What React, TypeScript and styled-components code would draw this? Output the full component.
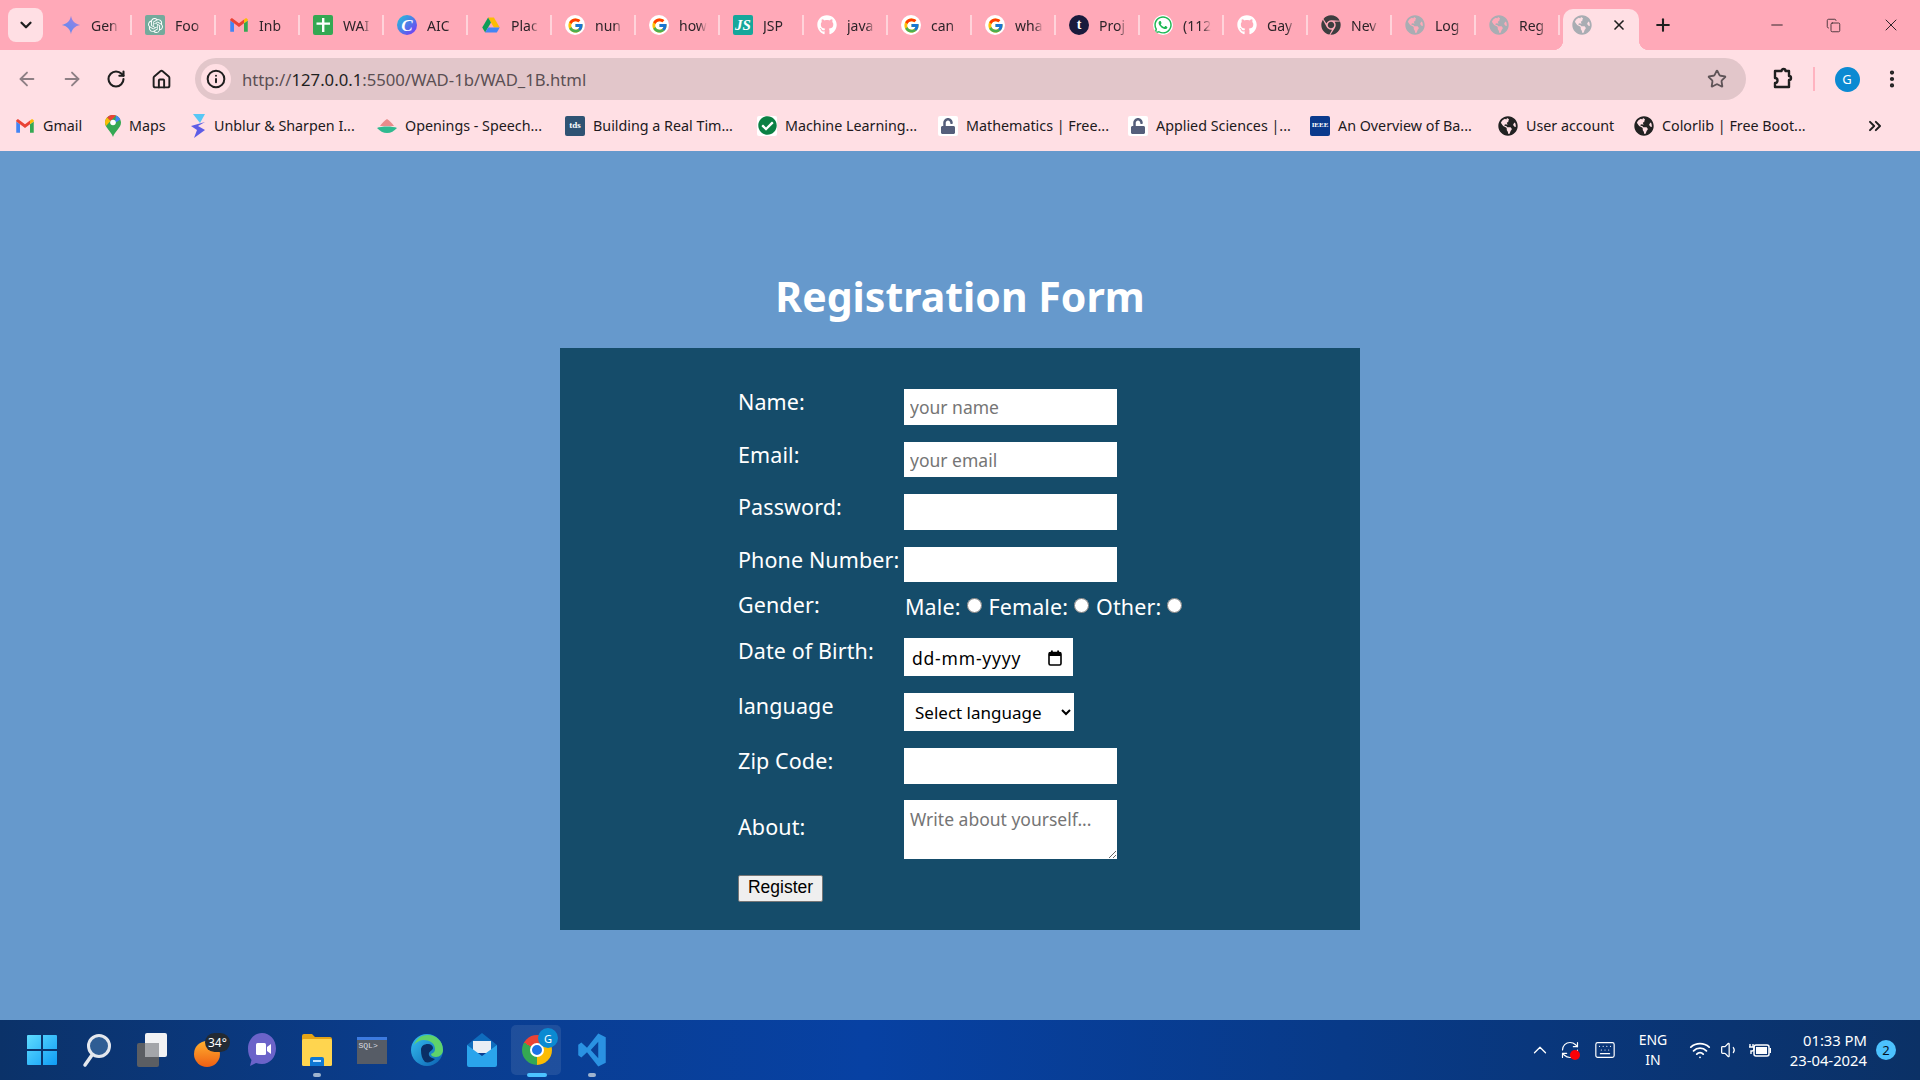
import type { ReactNode } from 'react'
import styled, { createGlobalStyle } from 'styled-components'
import {
  ArrowLeft, ArrowRight, ChevronDown, ChevronUp, ChevronsRight, Copy, Home, Info,
  Keyboard, Minus, MoreVertical, Plus, RefreshCw, RotateCw, Star, Volume1, Wifi, X,
} from 'lucide-react'
import { FcGoogle } from 'react-icons/fc'
import { FaChrome, FaCheckCircle, FaGithub, FaGlobeAmericas, FaUnlock, FaWhatsapp } from 'react-icons/fa'
import { SiOpenai } from 'react-icons/si'

const UI_FONT = `"Noto Sans", "Open Sans", sans-serif`

const GlobalStyle = createGlobalStyle`
  html, body { margin: 0; padding: 0; height: 100%; overflow: hidden; }
  body { font-family: ${UI_FONT}; }
`

const Screen = styled.div`
  width: 1920px;
  height: 1080px;
  display: flex;
  flex-direction: column;
  background: #6699cc;
`

/* tab strip */

const TabStrip = styled.div`
  height: 50px;
  flex: none;
  display: flex;
  align-items: flex-start;
  background: #ffa9b8;
  position: relative;
`

const TabSearch = styled.div`
  width: 35px;
  height: 34px;
  margin: 8px 5px 0 8px;
  border-radius: 8px;
  background: #ffdfe4;
  display: flex;
  align-items: center;
  justify-content: center;
  color: #1f1f1f;
`

const Tab = styled.div<{ $active?: boolean }>`
  width: 84px;
  height: 50px;
  flex: none;
  box-sizing: border-box;
  padding-left: 13px;
  display: flex;
  align-items: center;
  gap: 10px;
  position: relative;
  font-size: 14px;
  color: #2d2429;

  ${p => !p.$active && `
    &:not(:nth-last-of-type(2))::after {
      content: '';
      position: absolute;
      right: 0;
      top: 15px;
      width: 2px;
      height: 20px;
      background: #ffd3da;
    }
  `}

  ${p => p.$active && `
    margin-left: -1px;

    &::before {
      content: '';
      position: absolute;
      z-index: 0;
      left: 4px;
      right: 4px;
      top: 9px;
      bottom: 0;
      background: #ffdfe4;
      border-radius: 10px 10px 0 0;
    }
  `}
`

const TabCorner = styled.span<{ $side: 'left' | 'right' }>`
  position: absolute;
  bottom: 0;
  width: 10px;
  height: 10px;
  ${p => (p.$side === 'left' ? 'left: -6px;' : 'right: -6px;')}
  background: radial-gradient(circle at ${p => (p.$side === 'left' ? '0 0' : '100% 0')}, transparent 10px, #ffdfe4 10.5px);
`

const FavSlot = styled.span<{ $round?: boolean; $bg?: string; $color?: string }>`
  width: 20px;
  height: 20px;
  flex: none;
  display: flex;
  align-items: center;
  justify-content: center;
  position: relative;
  z-index: 1;
  border-radius: ${p => (p.$round ? '50%' : '2px')};
  background: ${p => p.$bg ?? 'transparent'};
  color: ${p => p.$color ?? 'inherit'};
  overflow: hidden;
`

const LetterMark = styled.span<{ $size: number; $italic?: boolean }>`
  font-family: "Liberation Serif", serif;
  font-size: ${p => p.$size}px;
  font-weight: 700;
  font-style: ${p => (p.$italic ? 'italic' : 'normal')};
  color: #fff;
  line-height: 1;
`

const TabTitle = styled.span`
  width: 28px;
  overflow: hidden;
  white-space: nowrap;
  mask-image: linear-gradient(to right, #000 70%, transparent);
`

const TabClose = styled.span`
  position: absolute;
  left: 52px;
  top: 17px;
  display: flex;
  color: #1f1f1f;
`

const NewTab = styled.span`
  margin: 15px 0 0 10px;
  display: flex;
  color: #1f1f1f;
`

const WindowControls = styled.div`
  margin-left: auto;
  height: 50px;
  display: flex;
  align-items: center;
  gap: 40px;
  padding-right: 19px;
  color: #2d2429;
`

/* toolbar */

const Toolbar = styled.div`
  height: 50px;
  flex: none;
  box-sizing: border-box;
  background: #ffdfe4;
  display: flex;
  align-items: center;
  padding: 8px 10px 0 16px;
`

const NavButton = styled.span<{ $muted?: boolean }>`
  width: 45px;
  flex: none;
  display: flex;
  color: ${p => (p.$muted ? '#8d7f84' : '#1f1f1f')};
`

const AddressBar = styled.div`
  width: 1551px;
  height: 42px;
  flex: none;
  margin-left: -1px;
  border-radius: 21px;
  background: #e2c6ca;
  display: flex;
  align-items: center;
  box-sizing: border-box;
  padding: 0 19px 0 6px;
`

const InfoBadge = styled.span`
  width: 30px;
  height: 30px;
  border-radius: 50%;
  background: #ffdfe4;
  display: flex;
  align-items: center;
  justify-content: center;
  color: #1f1f1f;
`

const UrlText = styled.span`
  margin-left: 11px;
  flex: 1;
  font-size: 16.7px;
  color: #5a4f53;

  b {
    font-weight: 400;
    color: #1f1f1f;
  }
`

const ToolbarEnd = styled.div`
  display: flex;
  align-items: center;
  margin-left: 23px;
  color: #1f1f1f;
`

const ToolbarRule = styled.span`
  width: 2px;
  height: 24px;
  margin: 0 19.5px 0 20px;
  background: #ffb3c0;
`

const Avatar = styled.span`
  width: 25px;
  height: 25px;
  border-radius: 50%;
  background: #0b8ad2;
  color: #fff;
  font-size: 13px;
  display: flex;
  align-items: center;
  justify-content: center;
`

const MenuDots = styled.span`
  margin-left: 21px;
  display: flex;
`

/* bookmarks */

const BookmarkBar = styled.div`
  height: 51px;
  flex: none;
  box-sizing: border-box;
  background: #ffdfe4;
  display: flex;
  align-items: center;
  padding: 0 0 0 15px;
  position: relative;
`

const Bookmark = styled.span<{ $width: number }>`
  width: ${p => p.$width}px;
  flex: none;
  display: flex;
  align-items: center;
  gap: 8px;
  font-size: 14.3px;
  color: #21191c;
  white-space: nowrap;
`

const MoreBookmarks = styled.span`
  margin-left: auto;
  margin-right: 35px;
  display: flex;
  color: #1f1f1f;
`

/* page */

const Main = styled.main`
  flex: 1;
  display: flex;
  flex-direction: column;
  align-items: center;
  padding-top: 121px;
  min-height: 0;
`

const Title = styled.h1`
  margin: 0 0 28px;
  font-size: 41px;
  line-height: 48px;
  font-weight: 700;
  color: #fff;
`

const Card = styled.form`
  width: 800px;
  height: 582px;
  box-sizing: border-box;
  padding: 41px 0 0 178px;
  background: #154c6a;
`

const Row = styled.div<{ $after?: number; $height?: string; $center?: boolean }>`
  display: flex;
  align-items: ${p => (p.$center ? 'center' : 'flex-start')};
  height: ${p => p.$height ?? 'auto'};
  margin-bottom: ${p => p.$after ?? 17}px;
`

const Label = styled.label`
  width: 166px;
  flex: none;
  font-size: 21.5px;
  line-height: 26px;
  letter-spacing: 0.1px;
  color: #fff;
  white-space: nowrap;
`

const AboutLabel = styled(Label)`
  margin-top: -4px;
`

const fieldFont = `
  font-family: ${UI_FONT};
  font-size: 17.5px;
  border: none;
  outline: none;
  background: #fff;
  box-sizing: border-box;
`

const TextInput = styled.input`
  ${fieldFont}
  width: 213px;
  height: 35.5px;
  padding: 1px 6px 0;

  &::placeholder {
    color: #757575;
  }
`

const GenderGroup = styled.div`
  display: flex;
  align-items: center;
  padding: 2px 0 0 1px;
  font-size: 21.5px;
  line-height: 26px;
  letter-spacing: 0.1px;
  color: #fff;
`

const Radio = styled.input.attrs({ type: 'radio', name: 'gender' })`
  width: 15px;
  height: 15px;
  margin: -3px 7px 0 6px;
  accent-color: #fff;
`

const DateField = styled.div`
  ${fieldFont}
  width: 169px;
  height: 38px;
  padding: 1px 11px 0 8px;
  display: flex;
  align-items: center;
  justify-content: space-between;
  letter-spacing: 0.8px;
  color: #000;
`

const LanguageSelect = styled.select`
  ${fieldFont}
  font-size: 17px;
  width: 170px;
  height: 38px;
  padding-left: 7px;
  color: #000;
`

const AboutArea = styled.textarea`
  ${fieldFont}
  width: 213px;
  height: 59px;
  padding: 7px 6px 3px;
  display: block;

  &::placeholder {
    color: #757575;
  }
`

const Submit = styled.button`
  width: 85px;
  height: 27px;
  padding: 0;
  box-sizing: border-box;
  font-family: "Liberation Sans", Arial, sans-serif;
  font-size: 17.5px;
  line-height: 1;
  color: #000;
  background: #efefef;
  border: 1px solid #767676;
  border-radius: 2px;
`

/* taskbar */

const Taskbar = styled.footer`
  height: 60px;
  flex: none;
  display: flex;
  align-items: center;
  padding-left: 14px;
  background: linear-gradient(90deg, #0b3269 0%, #0a3d8e 22%, #0741a3 45%, #083a88 70%, #0b3166 100%);
`

const TaskIcon = styled.span<{ $mark?: 'open' | 'active' }>`
  width: 55px;
  height: 60px;
  flex: none;
  display: flex;
  align-items: center;
  justify-content: center;
  position: relative;

  ${p => p.$mark === 'active' && `
    &::before {
      content: '';
      position: absolute;
      left: 2px;
      right: 3px;
      top: 5px;
      bottom: 5px;
      border-radius: 5px;
      background: rgba(255, 255, 255, 0.09);
    }
  `}

  ${p => p.$mark && `
    &::after {
      content: '';
      position: absolute;
      left: 50%;
      bottom: 3px;
      height: 4px;
      width: ${p.$mark === 'active' ? 20 : 8}px;
      margin-left: -${p.$mark === 'active' ? 10 : 4}px;
      border-radius: 2px;
      background: ${p.$mark === 'active' ? '#4cc2ff' : '#9fb4cf'};
    }
  `}
`

const WeatherChip = styled.span`
  position: absolute;
  left: 26px;
  top: 13px;
  padding: 0 3px;
  height: 19px;
  line-height: 19px;
  border-radius: 10px;
  background: #232a33;
  color: #fff;
  font-size: 12px;
`

const ChromeMark = styled.span`
  width: 30px;
  height: 30px;
  border-radius: 50%;
  background: conic-gradient(from 300deg, #ea4335 0 120deg, #fbbc04 120deg 240deg, #34a853 240deg 360deg);
  display: flex;
  align-items: center;
  justify-content: center;
  position: relative;
  z-index: 1;

  &::before {
    content: '';
    width: 10px;
    height: 10px;
    border-radius: 50%;
    border: 2.5px solid #fff;
    background: #1a73e8;
  }
`

const ChromeBadge = styled.span`
  position: absolute;
  z-index: 2;
  left: 29px;
  top: 8px;
  width: 20px;
  height: 20px;
  border-radius: 50%;
  background: #0b8ad2;
  color: #fff;
  font-size: 11px;
  display: flex;
  align-items: center;
  justify-content: center;
`

const SqlMark = styled.span`
  width: 30px;
  height: 27px;
  box-sizing: border-box;
  border-top: 3px solid #3d7be0;
  background: #565c66;
  color: #d8dde4;
  font-family: "Liberation Mono", monospace;
  font-size: 8px;
  line-height: 11px;
  padding-left: 2px;
`

const Tray = styled.div`
  margin-left: auto;
  height: 60px;
  display: flex;
  align-items: center;
  color: #fff;
`

const TrayItem = styled.span<{ $width: number }>`
  width: ${p => p.$width}px;
  flex: none;
  display: flex;
  align-items: center;
  justify-content: center;
  position: relative;
`

const RedDot = styled.span`
  position: absolute;
  left: 50%;
  top: 10px;
  width: 10px;
  height: 10px;
  border-radius: 50%;
  background: #fb0007;
`

const LangText = styled.span`
  font-size: 14px;
  line-height: 20px;
  text-align: center;
`

const ClockText = styled.span`
  width: 100%;
  font-size: 14.8px;
  line-height: 20px;
  text-align: right;
  white-space: nowrap;
`

const NoticeBadge = styled.span`
  width: 20px;
  height: 20px;
  margin: 0 24px 0 9px;
  border-radius: 50%;
  background: #4cc2ff;
  color: #06121f;
  font-size: 13px;
  display: flex;
  align-items: center;
  justify-content: center;
`

/* drawn marks */

const GeminiMark = () => (
  <svg width="20" height="20" viewBox="0 0 24 24">
    <defs>
      <linearGradient id="gem" x1="0" y1="1" x2="1" y2="0">
        <stop offset="0" stopColor="#4f8df5" />
        <stop offset="1" stopColor="#a97fe0" />
      </linearGradient>
    </defs>
    <path fill="url(#gem)" d="M12 1c1 6 5 10 11 11-6 1-10 5-11 11-1-6-5-10-11-11 6-1 10-5 11-11z" />
  </svg>
)

const GmailMark = () => (
  <svg width="20" height="20" viewBox="0 0 24 24">
    <path fill="#4285f4" d="M1.5 20V6.5L6 10v10z" />
    <path fill="#34a853" d="M18 20V10l4.5-3.5V20z" />
    <path fill="#ea4335" d="M6 10 1.5 6.5V5L3.5 3.5 12 10l6-4.6V10l-6 4.5z" />
    <path fill="#fbbc04" d="M18 10V5.4l2.5-1.9 2 1.5v1.500z" />
  </svg>
)

const SheetMark = () => (
  <svg width="20" height="20" viewBox="0 0 20 20">
    <rect width="20" height="20" rx="2" fill="#34a853" />
    <path fill="#fff" d="M9 3h2.400v4.500H17v2.300h-5.600V17H9V9.800H3.500V7.500H9z" />
  </svg>
)

const DriveMark = () => (
  <svg width="20" height="20" viewBox="0 0 24 24">
    <path fill="#fbbc04" d="M8.500 3h7l7 12h-7z" />
    <path fill="#0f9d58" d="M8.500 3 1.500 15 5 21l7-12z" />
    <path fill="#4285f4" d="M5 21h14l3.500-6h-14z" />
  </svg>
)

const MapsMark = () => (
  <svg width="16" height="22" viewBox="0 0 16 22">
    <path fill="#34a853" d="M8 0c4.400 0 8 3.400 8 7.600C16 13 10 16 8 22 6 16 0 13 0 7.600 0 3.400 3.600 0 8 0z" />
    <path fill="#ea4335" d="M2 2.600A8 8 0 0 1 11 .6L5.500 6z" />
    <path fill="#4285f4" d="M11 .6a8 8 0 0 1 4.400 4L10 8z" />
    <path fill="#fbbc04" d="M0 7.600c0-2 .8-3.700 2-5L5.500 6 1 11C.4 9.900 0 8.800 0 7.600z" />
    <circle cx="8" cy="7.500" r="2.800" fill="#fff" />
  </svg>
)

const UnblurMark = () => (
  <svg width="16" height="24" viewBox="0 0 16 24">
    <path fill="#57c7f5" d="M3 0h12l-5 9z" />
    <path fill="#5d5ce6" d="M15 8 8 12l7 4-11 8 3-8-6-4z" />
  </svg>
)

const OpeningsMark = () => (
  <svg width="20" height="16" viewBox="0 0 20 16">
    <path fill="#e98b8b" d="M3 8c2-3 4-5 7-7 3 2 5 4 7 7z" />
    <path fill="#2fb98f" d="M0 10c4-2 16-2 20 0-3 3-6 5-10 5S3 13 0 10z" />
  </svg>
)

const ExtensionMark = () => (
  <svg width="24" height="24" viewBox="0 0 24 24" fill="none" stroke="currentColor" strokeWidth="2.400" strokeLinejoin="round">
    <path d="M6 4h6.500a2 2 0 0 1 4 0H20v5a2 2 0 0 1 0 4v7H6v-4a2.500 2.500 0 0 0 0-5z" />
  </svg>
)

const DateIcon = () => (
  <svg width="14" height="16" viewBox="0 0 14 16">
    <rect x="1" y="2.500" width="12" height="12.500" rx="1.500" fill="none" stroke="#000" strokeWidth="1.600" />
    <rect x="1" y="2.500" width="12" height="3.500" fill="#000" />
    <rect x="3" y="0.500" width="1.800" height="3" fill="#000" />
    <rect x="9.200" y="0.500" width="1.800" height="3" fill="#000" />
  </svg>
)

const StartMark = () => (
  <svg width="30" height="30" viewBox="0 0 30 30">
    <defs>
      <linearGradient id="win" x1="0" y1="0" x2="1" y2="1">
        <stop offset="0" stopColor="#5fdcff" />
        <stop offset="1" stopColor="#0f9cf5" />
      </linearGradient>
    </defs>
    <path fill="url(#win)" d="M0 1a1 1 0 0 1 1-1h13v14H0zM16 0h13a1 1 0 0 1 1 1v13H16zM0 16h14v14H1a1 1 0 0 1-1-1zM16 16h14v13a1 1 0 0 1-1 1H16z" />
  </svg>
)

const SearchMark = () => (
  <svg width="30" height="36" viewBox="0 0 30 36">
    <circle cx="17" cy="14" r="10.500" fill="#2f5d94" stroke="#e4e8ee" strokeWidth="3" />
    <path d="M10 23 3 33" stroke="#e4e8ee" strokeWidth="3.500" strokeLinecap="round" />
  </svg>
)

const TaskViewMark = () => (
  <svg width="30" height="34" viewBox="0 0 30 34">
    <rect x="0" y="10" width="22" height="24" rx="2" fill="#5b5e63" />
    <rect x="8" y="0" width="22" height="24" rx="2" fill="#f1f2f4" />
    <rect x="8" y="10" width="14" height="14" fill="#a4a6aa" />
  </svg>
)

const WeatherMark = () => (
  <svg width="26" height="36" viewBox="0 0 26 36">
    <defs>
      <linearGradient id="sun" x1="0" y1="0" x2="0" y2="1">
        <stop offset="0" stopColor="#ffb02e" />
        <stop offset="1" stopColor="#ef5f14" />
      </linearGradient>
    </defs>
    <circle cx="13" cy="22" r="13" fill="url(#sun)" />
  </svg>
)

const MeetMark = () => (
  <svg width="30" height="36" viewBox="0 0 30 36">
    <path fill="#6b63c9" d="M15 1c8 0 14 7 14 15.500S23 32 15 32c-2 0-4-.4-6-1l-6 3 1.500-6C2 25 1 21 1 16.500 1 8 7 1 15 1z" />
    <rect x="9" y="11" width="10" height="12" rx="1.500" fill="#fff" />
    <path fill="#fff" d="m20 15 4-3v10l-4-3z" />
  </svg>
)

const FolderMark = () => (
  <svg width="30" height="32" viewBox="0 0 30 32">
    <path fill="#e5a416" d="M0 2a2 2 0 0 1 2-2h8l3 3h15a2 2 0 0 1 2 2v6H0z" />
    <rect x="0" y="5" width="30" height="27" rx="1.500" fill="#ffd54f" />
    <path fill="#0f78d4" d="M8 25a2 2 0 0 1 2-2h10a2 2 0 0 1 2 2v7H8z" />
    <rect x="11" y="26" width="8" height="2" fill="#bfe3ff" />
  </svg>
)

const EdgeMark = () => (
  <svg width="32" height="36" viewBox="0 0 32 36">
    <defs>
      <linearGradient id="edge" x1="0" y1="0" x2="1" y2="1">
        <stop offset="0" stopColor="#35c1f1" />
        <stop offset="1" stopColor="#0b5fb0" />
      </linearGradient>
    </defs>
    <circle cx="16" cy="18" r="16" fill="url(#edge)" />
    <path fill="#5fd36b" d="M17 3c8 0 15 6 15 15 0 4-3 7-7 7-3 0-5-1-5-3 3-1 4-3 4-5 0-6-6-9-11-9-4 0-8 2-10 5C5 7 10 3 17 3z" />
    <path fill="#0a2f66" d="M10 18c0-4 3-6 7-6 3 0 5 2 5 4 0 2-3 3-4 5-1 3 2 5 6 6-3 3-7 4-10 3-3-3-4-7-4-12z" />
  </svg>
)

const MailMark = () => (
  <svg width="30" height="34" viewBox="0 0 30 34">
    <path fill="#0f6cbd" d="M15 0 30 12v6H0v-6z" />
    <rect x="6" y="8" width="18" height="12" fill="#e8eef5" />
    <path fill="#2aa4ec" d="M0 12l15 11 15-11v20a2 2 0 0 1-2 2H2a2 2 0 0 1-2-2z" />
  </svg>
)

const VsCodeMark = () => (
  <svg width="30" height="36" viewBox="0 0 24 24" preserveAspectRatio="none">
    <path fillRule="evenodd" fill="#2a92e2" d="M17 1 8 10.500 3.500 7 1 8.500v7L3.500 17 8 13.500 17 23l6-2.500v-17zM17 6.500v11L11 12z" />
  </svg>
)

const BatteryMark = () => (
  <svg width="22" height="16" viewBox="0 0 22 16">
    <rect x="5" y="3" width="15" height="11" rx="2" fill="none" stroke="#fff" strokeWidth="1.500" />
    <rect x="7" y="5" width="11" height="7" fill="#fff" />
    <rect x="20.500" y="6" width="1.500" height="5" fill="#fff" />
    <path d="M1 2v3M4 2v3M0 5h5v2a2 2 0 0 1-2 2H2v3" fill="none" stroke="#fff" strokeWidth="1.400" />
  </svg>
)

/* data */

const Globe = ({ color }: { color: string }) => <FaGlobeAmericas size={20} color={color} />

const tabs: { title: string; icon: ReactNode }[] = [
  { title: 'Gen', icon: <GeminiMark /> },
  { title: 'Foo', icon: <FavSlot $bg="#74aa9c" $color="#fff"><SiOpenai size={15} /></FavSlot> },
  { title: 'Inb', icon: <GmailMark /> },
  { title: 'WAI', icon: <SheetMark /> },
  { title: 'AIC', icon: <FavSlot $round $bg="linear-gradient(135deg, #1fc8d8, #7b2ff7)"><LetterMark $size={17} $italic>C</LetterMark></FavSlot> },
  { title: 'Plac', icon: <DriveMark /> },
  { title: 'nun', icon: <FavSlot $round $bg="#fff"><FcGoogle size={17} /></FavSlot> },
  { title: 'how', icon: <FavSlot $round $bg="#fff"><FcGoogle size={17} /></FavSlot> },
  { title: 'JSP', icon: <FavSlot $bg="#16a79b"><LetterMark $size={15} $italic>JS</LetterMark></FavSlot> },
  { title: 'java', icon: <FaGithub size={20} color="#fff" /> },
  { title: 'can', icon: <FavSlot $round $bg="#fff"><FcGoogle size={17} /></FavSlot> },
  { title: 'wha', icon: <FavSlot $round $bg="#fff"><FcGoogle size={17} /></FavSlot> },
  { title: 'Proj', icon: <FavSlot $round $bg="#191a3c"><LetterMark $size={14}>t</LetterMark></FavSlot> },
  { title: '(112', icon: <FavSlot $round $bg="#fff" $color="#1fb855"><FaWhatsapp size={20} /></FavSlot> },
  { title: 'Gay', icon: <FaGithub size={20} color="#fff" /> },
  { title: 'Nev', icon: <FaChrome size={20} color="#3d3d3f" /> },
  { title: 'Log', icon: <Globe color="#a9adb3" /> },
  { title: 'Reg', icon: <Globe color="#a9adb3" /> },
]

const bookmarks: { title: string; width: number; icon: ReactNode }[] = [
  { title: 'Gmail', width: 90, icon: <GmailMark /> },
  { title: 'Maps', width: 85, icon: <MapsMark /> },
  { title: 'Unblur & Sharpen I...', width: 187, icon: <UnblurMark /> },
  { title: 'Openings - Speech...', width: 188, icon: <OpeningsMark /> },
  { title: 'Building a Real Tim...', width: 192, icon: <FavSlot $bg="#2f5373"><LetterMark $size={9}>tds</LetterMark></FavSlot> },
  { title: 'Machine Learning...', width: 181, icon: <FavSlot $bg="#fff" $color="#0b8043"><FaCheckCircle size={19} /></FavSlot> },
  { title: 'Mathematics | Free...', width: 190, icon: <FavSlot $bg="#fff" $color="#555e7a"><FaUnlock size={16} /></FavSlot> },
  { title: 'Applied Sciences |...', width: 182, icon: <FavSlot $bg="#fff" $color="#555e7a"><FaUnlock size={16} /></FavSlot> },
  { title: 'An Overview of Ba...', width: 188, icon: <FavSlot $bg="#0b3a8c"><LetterMark $size={7}>IEEE</LetterMark></FavSlot> },
  { title: 'User account', width: 136, icon: <Globe color="#222" /> },
  { title: 'Colorlib | Free Boot...', width: 190, icon: <Globe color="#222" /> },
]

export default function App() {
  return (
    <Screen>
      <GlobalStyle />
      <TabStrip>
        <TabSearch><ChevronDown size={18} strokeWidth={3} /></TabSearch>
        {tabs.map(t => (
          <Tab key={t.title}>
            {t.icon}
            <TabTitle>{t.title}</TabTitle>
          </Tab>
        ))}
        <Tab $active>
          <TabCorner $side="left" />
          <TabCorner $side="right" />
          <FavSlot><Globe color="#a9adb3" /></FavSlot>
          <TabClose><X size={16} strokeWidth={2.5} /></TabClose>
        </Tab>
        <NewTab><Plus size={20} strokeWidth={2.5} /></NewTab>
        <WindowControls>
          <Minus size={18} strokeWidth={1.3} />
          <Copy size={15} strokeWidth={1.3} />
          <X size={20} strokeWidth={1.2} />
        </WindowControls>
      </TabStrip>

      <Toolbar>
        <NavButton $muted><ArrowLeft size={22} /></NavButton>
        <NavButton $muted><ArrowRight size={22} /></NavButton>
        <NavButton><RotateCw size={20} strokeWidth={2.5} /></NavButton>
        <NavButton><Home size={21} strokeWidth={2.2} /></NavButton>
        <AddressBar>
          <InfoBadge><Info size={20} strokeWidth={2.4} /></InfoBadge>
          <UrlText>http://<b>127.0.0.1</b>:5500/WAD-1b/WAD_1B.html</UrlText>
          <Star size={20} color="#5f5458" strokeWidth={2.2} />
        </AddressBar>
        <ToolbarEnd>
          <ExtensionMark />
          <ToolbarRule />
          <Avatar>G</Avatar>
          <MenuDots><MoreVertical size={22} strokeWidth={2.6} /></MenuDots>
        </ToolbarEnd>
      </Toolbar>

      <BookmarkBar>
        {bookmarks.map(b => (
          <Bookmark key={b.title} $width={b.width}>
            {b.icon}
            {b.title}
          </Bookmark>
        ))}
        <MoreBookmarks><ChevronsRight size={20} strokeWidth={2.4} /></MoreBookmarks>
      </BookmarkBar>

      <Main>
        <Title>Registration Form</Title>
        <Card onSubmit={e => e.preventDefault()}>
          <Row>
            <Label htmlFor="name">Name:</Label>
            <TextInput id="name" type="text" placeholder="your name" />
          </Row>
          <Row>
            <Label htmlFor="email">Email:</Label>
            <TextInput id="email" type="email" placeholder="your email" />
          </Row>
          <Row>
            <Label htmlFor="password">Password:</Label>
            <TextInput id="password" type="password" />
          </Row>
          <Row $after={10}>
            <Label htmlFor="phone">Phone Number:</Label>
            <TextInput id="phone" type="tel" />
          </Row>
          <Row $height="29px">
            <Label>Gender:</Label>
            <GenderGroup>
              Male:<Radio />
              Female:<Radio />
              Other:<Radio />
            </GenderGroup>
          </Row>
          <Row>
            <Label>Date of Birth:</Label>
            <DateField>
              dd-mm-yyyy
              <DateIcon />
            </DateField>
          </Row>
          <Row>
            <Label htmlFor="language">language</Label>
            <LanguageSelect id="language" defaultValue="">
              <option value="">Select language</option>
              <option>English</option>
              <option>Hindi</option>
            </LanguageSelect>
          </Row>
          <Row $after={16}>
            <Label htmlFor="zip">Zip Code:</Label>
            <TextInput id="zip" type="text" />
          </Row>
          <Row $center $after={16}>
            <AboutLabel htmlFor="about">About:</AboutLabel>
            <AboutArea id="about" placeholder="Write about yourself..." />
          </Row>
          <Submit type="submit">Register</Submit>
        </Card>
      </Main>

      <Taskbar>
        <TaskIcon><StartMark /></TaskIcon>
        <TaskIcon><SearchMark /></TaskIcon>
        <TaskIcon><TaskViewMark /></TaskIcon>
        <TaskIcon><WeatherMark /><WeatherChip>34°</WeatherChip></TaskIcon>
        <TaskIcon><MeetMark /></TaskIcon>
        <TaskIcon $mark="open"><FolderMark /></TaskIcon>
        <TaskIcon><SqlMark>SQL&gt;</SqlMark></TaskIcon>
        <TaskIcon><EdgeMark /></TaskIcon>
        <TaskIcon><MailMark /></TaskIcon>
        <TaskIcon $mark="active"><ChromeMark /><ChromeBadge>G</ChromeBadge></TaskIcon>
        <TaskIcon $mark="open"><VsCodeMark /></TaskIcon>
        <Tray>
          <TrayItem $width={22}><ChevronUp size={22} strokeWidth={1.4} /></TrayItem>
          <TrayItem $width={38}><RefreshCw size={20} strokeWidth={1.4} /><RedDot /></TrayItem>
          <TrayItem $width={32}><Keyboard size={22} strokeWidth={1.3} /></TrayItem>
          <TrayItem $width={64}><LangText>ENG<br />IN</LangText></TrayItem>
          <TrayItem $width={30}><Wifi size={22} strokeWidth={2} /></TrayItem>
          <TrayItem $width={30}><Volume1 size={20} strokeWidth={1.5} /></TrayItem>
          <TrayItem $width={30}><BatteryMark /></TrayItem>
          <TrayItem $width={92}><ClockText>01:33 PM<br />23-04-2024</ClockText></TrayItem>
          <NoticeBadge>2</NoticeBadge>
        </Tray>
      </Taskbar>
    </Screen>
  )
}
